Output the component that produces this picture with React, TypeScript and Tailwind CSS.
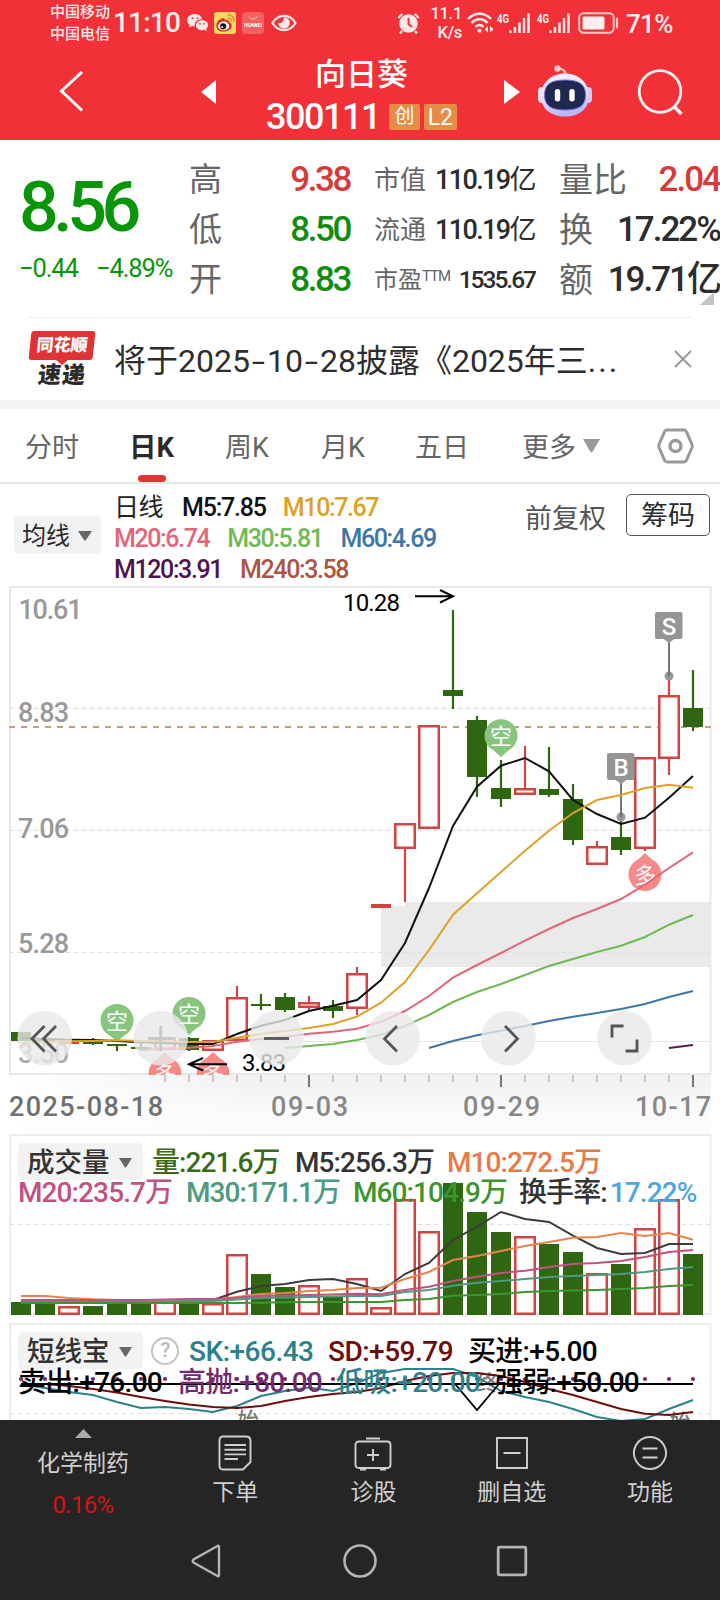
import React from 'react';

type Candle = { up: boolean; top: number; bottom: number; high: number; low: number };

const STEP = 24;
const cx = (i: number) => 21 + i * STEP;

const c = (kind: 'r' | 'g', top: number, bottom: number, high = top, low = bottom): Candle => ({
  up: kind === 'r',
  top,
  bottom,
  high,
  low,
});

const CANDLES: Candle[] = [
  c('g', 1032, 1041),
  c('g', 1040, 1042),
  c('r', 1041, 1044),
  c('g', 1041, 1044, 1038, 1045),
  c('g', 1044, 1046, 1044, 1051),
  c('g', 1047, 1049, 1043, 1051),
  c('r', 1037, 1050),
  c('g', 1038, 1050, 1037, 1051),
  c('r', 1040, 1051),
  c('r', 997, 1041, 986, 1041),
  c('g', 1004, 1006, 994, 1010),
  c('g', 997, 1010, 993, 1012),
  c('r', 1002, 1008, 996, 1011),
  c('g', 1006, 1011, 1000, 1018),
  c('r', 973, 1009, 967, 1015),
  c('r', 904, 908),
  c('r', 823, 849, 823, 902),
  c('r', 725, 829),
  c('g', 690, 696, 610, 709),
  c('g', 720, 777, 716, 797),
  c('g', 788, 799, 760, 807),
  c('r', 788, 795, 746, 795),
  c('g', 789, 795, 747, 797),
  c('g', 799, 840, 784, 845),
  c('r', 846, 865, 841, 865),
  c('g', 837, 850, 817, 855),
  c('r', 757, 849, 757, 851),
  c('r', 695, 759, 676, 775),
  c('g', 708, 727, 670, 731),
];

const PRICE_LINES = [
  { color: '#5a1a55', start: 27, ys: [1048, 1045] },
  { color: '#3d77a6', start: 17, ys: [1048, 1041, 1035.3, 1030.7, 1026, 1021, 1016.7, 1013, 1009, 1004, 997, 991] },
  { color: '#6fb957', start: 11, ys: [1048, 1046, 1044, 1040, 1034.7, 1026, 1015, 1002, 992, 984, 975, 966, 959, 952, 945.7, 937, 924.7, 915] },
  { color: '#e4647a', start: 5, ys: [1050, 1049, 1047.7, 1046, 1041.7, 1039, 1036.7, 1033.7, 1031.7, 1028.7, 1021.7, 1011, 996, 977.7, 965, 953, 940.7, 929, 918, 909, 899, 884.7, 868, 852.3] },
  { color: '#111111', start: 0, ys: [1038, 1039, 1039.7, 1040, 1041, 1042.3, 1043, 1044, 1044, 1034, 1025.7, 1020, 1011, 1005.7, 1000, 980, 943, 888, 826, 786.7, 765.7, 758, 771.3, 800, 814, 824, 817.7, 797.7, 776] },
  { color: '#dda127', start: 0, ys: [1043, 1042, 1041.3, 1041, 1040.3, 1041, 1041.5, 1042, 1042, 1037.7, 1034, 1031, 1028, 1024, 1016.7, 1002.7, 982, 950, 914.7, 893.3, 872, 850.7, 830.7, 813, 800, 795, 788, 784.7, 787.7] },
];

const VOLUMES = [
  1302, 1304, 1306, 1306, 1304, 1304, 1300, 1303, 1303, 1254, 1274, 1287, 1285, 1297, 1278, 1307,
  1199, 1231, 1183, 1212, 1232, 1236, 1244, 1252, 1273, 1264, 1228, 1199, 1254,
];

const VOLUME_LINES = [
  { color: '#3c3c3c', start: 0, ys: [1300, 1300, 1300, 1300, 1300, 1300, 1300, 1300, 1300, 1291.7, 1286, 1284, 1280, 1279, 1284, 1291, 1274, 1263, 1240, 1226.7, 1212, 1219, 1222, 1235.7, 1248, 1254, 1253, 1244, 1244] },
  { color: '#e8824e', start: 0, ys: [1296, 1296, 1298, 1299.3, 1300, 1300, 1300, 1301, 1300, 1297, 1294, 1293, 1291, 1290, 1288, 1287.7, 1279, 1272, 1260, 1256, 1251, 1246, 1242, 1237.7, 1237, 1233, 1236, 1233, 1239.7] },
  { color: '#c2517f', start: 0, ys: [1300, 1300, 1300, 1300, 1300, 1300, 1299.5, 1299, 1299, 1297.7, 1296, 1295.5, 1295, 1294.5, 1293.7, 1294.3, 1290, 1286.7, 1281, 1276.7, 1273, 1270.7, 1267, 1264, 1263, 1261, 1257, 1252, 1250] },
  { color: '#4d9a80', start: 0, ys: [1302, 1302, 1302, 1302, 1302, 1302, 1302, 1301, 1301, 1299.5, 1298, 1297.5, 1297, 1296.5, 1296, 1296, 1292, 1290, 1285.7, 1282.7, 1281, 1279, 1277, 1276, 1275, 1274, 1272, 1269, 1267] },
  { color: '#3d9530', start: 0, ys: [1303, 1303, 1303, 1303, 1303, 1303, 1303, 1303, 1303, 1303, 1302.7, 1302.3, 1302, 1302, 1302, 1302, 1300, 1299, 1295.7, 1295, 1294, 1292, 1291, 1290.5, 1290, 1289, 1288, 1286, 1285] },
];

const SHORT_LINES = [
  { color: '#2c818a', start: 0, ys: [1384, 1388, 1392, 1395, 1402, 1408, 1407, 1409, 1412, 1406, 1396, 1391, 1387.5, 1391, 1383, 1373, 1369, 1369, 1369, 1377, 1391, 1397, 1402, 1409, 1417, 1421, 1419, 1409, 1400] },
  { color: '#6d0d0d', start: 0, ys: [1384, 1384, 1386, 1389, 1392.5, 1397, 1401, 1404.5, 1407, 1408, 1406, 1401, 1397, 1394, 1392, 1388, 1381, 1376, 1373, 1373, 1376, 1382, 1389, 1395, 1402, 1409, 1413.7, 1415, 1412] },
];

const toPoints = (ys: number[], start: number) => ys.map((y, i) => `${cx(i + start)},${y}`).join(' ');

const RED = '#d04444';
const GREEN = '#2e6612';

const Lines: React.FC<{ data: { color: string; start: number; ys: number[] }[] }> = ({ data }) => (
  <>
    {data.map((l) => (
      <polyline key={l.color} points={toPoints(l.ys, l.start)} fill="none" stroke={l.color} strokeWidth={2} />
    ))}
  </>
);

const Bar: React.FC<{ x: number; top: number; bottom: number; up: boolean }> = ({ x, top, bottom, up }) => {
  if (!up) return <rect x={x - 10} y={top} width={20} height={bottom - top} fill={GREEN} />;
  if (bottom - top < 5) return <rect x={x - 10} y={top} width={20} height={bottom - top} fill={RED} />;
  return (
    <rect x={x - 9.75} y={top + 1.25} width={19.5} height={bottom - top - 2.5} fill="white" stroke={RED} strokeWidth={2.5} />
  );
};

// Bubble marking a bearish (空) or bullish (多) signal
const Signal: React.FC<{ x: number; y: number; bull?: boolean }> = ({ x, y, bull }) => {
  const dir = bull ? -1 : 1;
  return (
    <g fill={bull ? '#f58b89' : '#87c47e'}>
      <circle cx={x} cy={y} r={16.5} />
      <path d={`M${x - 8} ${y + dir * 14} L${x} ${y + dir * 21.5} L${x + 8} ${y + dir * 14} Z`} />
      <text x={x} y={y + 8} fontSize={22} fill="white" textAnchor="middle">{bull ? '多' : '空'}</text>
    </g>
  );
};

const TradeFlag: React.FC<{ x: number; y: number; label: string; dotY: number }> = ({ x, y, label, dotY }) => (
  <g>
    <circle cx={x} cy={dotY} r={4.5} fill="#999" />
    <path d={`M${x} ${y + 30} V${dotY}`} stroke="#666" strokeWidth={1.8} />
    <rect x={x - 14} y={y} width={27.5} height={27} rx={2} fill="#959595" />
    <path d={`M${x - 6} ${y + 26.5} L${x} ${y + 31} L${x + 6} ${y + 26.5} Z`} fill="#959595" />
    <text x={x} y={y + 22.5} fontSize={24} fontWeight={500} fill="white" textAnchor="middle">{label}</text>
  </g>
);

const PriceChart: React.FC = () => (
  <svg className="block h-[550px] w-[720px]" viewBox="0 584 720 550">
    <defs>
      <linearGradient id="axisFade" x1="0" y1="0" x2="0" y2="1">
        <stop offset="0" stopColor="#f0f0f0" />
        <stop offset="0.6" stopColor="#fafafa" />
        <stop offset="1" stopColor="#fbfbfb" />
      </linearGradient>
      <linearGradient id="axisLeft" x1="0" y1="0" x2="1" y2="0">
        <stop offset="0" stopColor="white" />
        <stop offset="1" stopColor="white" stopOpacity="0" />
      </linearGradient>
      <clipPath id="plot">
        <rect x="9" y="584" width="703" height="491" />
      </clipPath>
    </defs>
    <rect x="9" y="1074" width="702" height="60" fill="url(#axisFade)" />
    <rect x="9" y="1074" width="240" height="60" fill="url(#axisLeft)" />
    <path d="M405 902 H711 V967 H381 V906 H405 Z" fill="#eaeaea" />
    <g stroke="#dedede" strokeWidth="1.2" strokeDasharray="4 4">
      <path d="M10 708.3 H711" />
      <path d="M10 830.3 H711" />
      <path d="M10 952.5 H711" />
    </g>
    <path d="M10 1041.5 H711" stroke="#e6e6e6" strokeWidth="1.2" />
    <rect x="10" y="587" width="700.5" height="487" fill="none" stroke="#e9e9e9" strokeWidth="2" />
    <path d="M9 727 H711" stroke="#bda477" strokeWidth="2" strokeDasharray="6 6" />

    <g fill="#999" fontSize="27" fontWeight="500">
      <text x="18.5" y="619" textLength="64">10.61</text>
      <text x="18" y="722" textLength="51">8.83</text>
      <text x="18" y="838" textLength="51">7.06</text>
      <text x="18" y="952.5" textLength="51">5.28</text>
      <text x="18" y="1063" textLength="51" fill="#aaa">3.50</text>
    </g>

    <g clipPath="url(#plot)">
      {CANDLES.map((k, i) => (
        <g key={i}>
          <path d={`M${cx(i)} ${k.high} V${k.low}`} stroke={k.up ? RED : GREEN} strokeWidth={2.2} />
          <Bar x={cx(i)} top={k.top} bottom={k.bottom} up={k.up} />
        </g>
      ))}
      <Signal x={117} y={1020.5} />
      <Signal x={189} y={1013.5} />
      <Signal x={501} y={735.7} />
      <Signal x={165} y={1073.5} bull />
      <Signal x={213} y={1073.5} bull />
      <Signal x={645} y={874.5} bull />
      <TradeFlag x={669} y={612} label="S" dotY={676} />
      <TradeFlag x={621} y={753} label="B" dotY={817} />
      <Lines data={PRICE_LINES} />
    </g>

    <g fill="none" stroke="black" strokeWidth="2">
      <path d="M415 596.3 H452 M440 590 L453 596.3 L440 602.5" />
      <path d="M227 1064.3 H190 M203 1058 L189 1064.3 L203 1070.5" />
    </g>
    <text x="343" y="611" fontSize="24" textLength="57">10.28</text>
    <text x="242" y="1070.5" fontSize="24" textLength="44">3.83</text>

    {[44.7, 160.7, 276.7, 392.7, 508.5, 624.5].map((x) => (
      <circle key={x} cx={x} cy={1038.3} r={27.3} fill="#e9e9e9" fillOpacity={0.8} />
    ))}
    <g fill="none" stroke="#555" strokeWidth="2.8">
      <path d="M44.5 1026 L32 1038.7 L44.5 1051.5 M56 1026 L43.5 1038.7 L56 1051.5" />
      <path d="M148 1038.5 H173 M160.7 1026 V1051" stroke="#c9c9c9" />
      <path d="M264 1038.5 H289" />
      <path d="M397 1026 L384.5 1038.7 L397 1051.5" />
      <path d="M505 1026 L517.5 1038.7 L505 1051.5" />
      <path d="M623.5 1026 H612 V1037.5 M637 1039.5 V1051 H625.5" />
    </g>

    {Array.from({ length: 23 }, (_, k) => {
      const x = 165 + k * STEP;
      const major = k % 8 === 6;
      return (
        <path key={x} d={`M${x} 1075 V${major ? 1087 : 1082}`} stroke={major ? '#777' : '#999'} strokeWidth={major ? 2 : 1} />
      );
    })}
    <g fill="#888" fontSize="27" fontWeight="500">
      <text x="9" y="1115.5" textLength="154" fill="#707070">2025-08-18</text>
      <text x="271" y="1115.5" textLength="77">09-03</text>
      <text x="463" y="1115.5" textLength="77">09-29</text>
      <text x="635" y="1115.5" textLength="76">10-17</text>
    </g>
  </svg>
);

const VolumeChart: React.FC = () => (
  <svg className="absolute inset-0 h-[189px] w-[720px]" viewBox="0 1134 720 189">
    <rect x="10" y="1135" width="700.5" height="179" fill="none" stroke="#ececec" strokeWidth="2" />
    <path d="M10 1224.3 H711" stroke="#dedede" strokeWidth="1.2" strokeDasharray="4 4" />
    {VOLUMES.map((top, i) => (
      <Bar key={i} x={cx(i)} top={top} bottom={1315} up={CANDLES[i].up} />
    ))}
    <Lines data={VOLUME_LINES} />
  </svg>
);

const ShortTermChart: React.FC = () => (
  <svg className="absolute inset-0 h-[97px] w-[720px]" viewBox="0 1323 720 97">
    <path d="M10 1420 V1324 H710.5 V1420" fill="none" stroke="#ececec" strokeWidth="2" />
    <path d="M10 1413.5 H711" stroke="#dedede" strokeWidth="1.2" strokeDasharray="4 4" />
    <g fill="#777" fontSize="21" textAnchor="middle">
      <text x="248" y="1427">始</text>
      <text x="680" y="1429">始</text>
      <text x="487" y="1390">终</text>
    </g>
    {CANDLES.map((_, i) => (
      <circle key={i} cx={cx(i)} cy={1379} r={2.1} fill="#74296f" />
    ))}
    <Lines data={SHORT_LINES} />
    <path d="M21 1384 H455 L477 1410 L499 1384 M455 1384 H693" fill="none" stroke="black" strokeWidth="1.8" />
  </svg>
);

const Caret: React.FC<{ className: string }> = ({ className }) => (
  <svg className={className} viewBox="0 0 14 10" preserveAspectRatio="none"><path d="M0 0 H14 L7.8 9.3 Q7 10 6.2 9.3 Z" fill="currentColor" /></svg>
);

const Robot: React.FC = () => (
  <svg className="h-[54px] w-[56px]" viewBox="0 0 56 54">
    <defs>
      <linearGradient id="shell" x1="0" y1="0" x2="0.3" y2="1">
        <stop offset="0" stopColor="#fff4fa" />
        <stop offset="0.6" stopColor="#e6dcfa" />
        <stop offset="1" stopColor="#b9b8fa" />
      </linearGradient>
    </defs>
    <path d="M28 11 C29 5.500 26 3.500 21 3.500" fill="none" stroke="#ffc9cf" strokeWidth="2.2" />
    <circle cx="20.500" cy="3.500" r="3.200" fill="#ffc9cf" />
    <rect x="1" y="22" width="8" height="16" rx="4" fill="#f3dcec" />
    <rect x="47" y="22" width="8" height="16" rx="4" fill="#d6c8f2" />
    <path d="M28 8.500 C42 8.500 52 18 52 31 C52 44 42 51.500 28 51.500 C14 51.500 4 44 4 31 C4 18 14 8.500 28 8.500 Z" fill="url(#shell)" />
    <path d="M28 15 C43 15 48.500 20 48.500 30 C48.500 40 43 45 28 45 C13 45 7.500 40 7.500 30 C7.500 20 13 15 28 15 Z" fill="#1f2850" stroke="#7d74dc" strokeWidth="1" />
    <rect x="17.800" y="24" width="5.400" height="12.500" rx="2.700" fill="white" />
    <rect x="32.300" y="24" width="5.400" height="12.500" rx="2.700" fill="white" />
  </svg>
);

const SignalBars: React.FC = () => (
  <svg className="h-6 w-[34px]" viewBox="0 0 34 24">
    <text x="0" y="11.5" fontSize="12.5" fontWeight="700" fill="#ffeceb" textLength="12" lengthAdjust="spacingAndGlyphs">4G</text>
    <path d="M13.5 22 V19.5 M18 22 V16 M22.5 22 V11.5 M27 22 V7 M31.5 22 V2.5" stroke="#ffe9e8" strokeWidth="2.5" />
  </svg>
);

const StatusBar: React.FC = () => (
  <div className="flex h-[46px] items-center pl-[50px] text-[#ffeceb]">
    <div className="w-[63px] text-[15px] leading-[22px] font-medium">
      <div>中国移动</div>
      <div>中国电信</div>
    </div>
    <span className="w-[74px] text-[28px] font-medium tracking-[-0.8px]">11:10</span>
    <svg className="h-[20px] w-[21px]" viewBox="0 0 21 20" fill="#ffe9e8">
      <path d="M8 1 C3.5 1 0 3.8 0 7.2 C0 9.2 1.1 10.8 2.7 12 L2 14.5 L5 13 C6 13.3 7 13.4 7.8 13.4 C7 8.5 11 6 15.2 6.2 C14.5 3.2 11.5 1 8 1 Z" />
      <path d="M21 12 C21 9.2 18.2 7.2 15 7.2 C11.7 7.2 9 9.4 9 12.2 C9 15 11.7 17.2 15 17.2 C15.8 17.2 16.6 17 17.3 16.8 L19.7 18.2 L19 16 C20.3 15 21 13.6 21 12 Z" />
      <g fill="#f03038"><circle cx="5.5" cy="5.3" r="1" /><circle cx="10.5" cy="5.3" r="1" /><circle cx="13" cy="10.8" r="0.9" /><circle cx="17" cy="10.8" r="0.9" /></g>
    </svg>
    <svg className="ml-[6px] h-[22px] w-[22px]" viewBox="0 0 22 22">
      <rect width="22" height="22" rx="3" fill="#fbd65c" />
      <path d="M8 6.5 C4.5 7.5 2 11 2.5 14.5 C3 18.5 7 20 10.5 19.6 C15 19 18.5 16 17.6 12.5 C17 11 15.5 11 15.3 10.3 C15 8 13 7.6 11.2 8.2 C10.8 6.5 9.6 6 8 6.5 Z" fill="#d92a25" />
      <ellipse cx="9.6" cy="14" rx="5.6" ry="4.4" fill="white" />
      <circle cx="9.2" cy="14.3" r="3.1" fill="#111" />
      <circle cx="8.2" cy="15" r="1" fill="white" />
      <path d="M14 6 C16 5.7 17.5 7.3 17 9.3 M13.6 3 C17.5 2.2 21 6 19.6 10" fill="none" stroke="#eb8c22" strokeWidth="1.4" />
    </svg>
    <svg className="ml-[6px] h-[22px] w-[22px]" viewBox="0 0 22 22">
      <rect width="22" height="22" rx="4" fill="#f4605f" />
      <path d="M7 4 C7.5 8 14.5 8 15 4" fill="none" stroke="#ffc5c3" strokeWidth="1" />
      <text x="2" y="14.5" fontSize="5" fontWeight="700" fill="white" textLength="18">HUAWEI</text>
    </svg>
    <svg className="ml-[7px] h-[20px] w-[26px]" viewBox="0 0 26 20" fill="none" stroke="#ffe9e8">
      <path d="M1.5 10 C7 0.5 19 0.5 24.5 10 C19 19.5 7 19.5 1.5 10 Z" strokeWidth="2.2" />
      <path d="M13 4.2 A5.8 5.8 0 1 1 7.2 10 C10 11 13 8 13 4.2 Z" fill="#ffe9e8" stroke="none" />
    </svg>
    <svg className="ml-[100px] h-[22px] w-[23px]" viewBox="0 0 23 22">
      <circle cx="11.5" cy="11.5" r="9.3" fill="#ffe9e8" />
      <path d="M1.5 6 A10 10 0 0 1 5.5 2 M17.500 2 A10 10 0 0 1 21.5 6 M5 19 L3 21.5 M18 19 L20 21.5" fill="none" stroke="#ffe9e8" strokeWidth="2.4" />
      <path d="M11.500 6 V12 L15 15" fill="none" stroke="#f03038" strokeWidth="2" />
    </svg>
    <div className="ml-[9px] w-[38px] text-right text-[16.5px] leading-[19px] font-medium tracking-[-0.3px] pr-[5px]">
      <div>11.1</div>
      <div>K/s</div>
    </div>
    <svg className="h-[22px] w-[27px]" viewBox="0 0 27 22" fill="none" stroke="#ffe9e8" strokeWidth="2.4">
      <path d="M1 7 C7.5 0 17.5 0 24 7 M4.5 11 C9 6 16 6 20.5 11 M8.5 15 C11 12.4 14 12.4 16.5 15" />
      <circle cx="12.5" cy="18.7" r="2" fill="#ffe9e8" stroke="none" />
      <path d="M21 14 L17.5 17.3 L21 20.5 Z M23 14 L26.5 17.3 L23 20.5 Z" fill="#ffe9e8" stroke="none" />
    </svg>
    <div className="ml-[3px] flex gap-[6px]">
      <SignalBars />
      <SignalBars />
    </div>
    <svg className="ml-[7px] h-[22px] w-[41px]" viewBox="0 0 41 22">
      <rect x="1.2" y="1.2" width="34.5" height="19.6" rx="4.5" fill="none" stroke="#ffc9c8" strokeWidth="2" />
      <rect x="4.5" y="4.5" width="22" height="13" rx="1.5" fill="#fff0ef" />
      <path d="M39 6.5 V15.5" stroke="#ffc9c8" strokeWidth="2.2" strokeLinecap="round" />
    </svg>
    <span className="ml-[7px] pt-[2px] text-[26px] font-medium tracking-[-0.7px]">71%</span>
  </div>
);

const Header: React.FC = () => (
  <header className="h-[140px] bg-[#f23037] text-white">
    <StatusBar />
    <div className="flex h-[94px] items-center pb-[2px]">
      <svg className="ml-[59px] h-[42px] w-[25px]" viewBox="0 0 25 42"><path d="M23 1 L2.5 20 L23 39.500" fill="none" stroke="white" strokeWidth="3" /></svg>
      <svg className="ml-[117px] h-6 w-[15px]" viewBox="0 0 15 24"><path d="M15 0 V24 L0 12 Z" fill="white" /></svg>
      <div className="ml-[49px] flex w-[193px] flex-col items-center pt-[10px]">
        <h1 className="text-[31px] leading-[40px] font-medium">向日葵</h1>
        <div className="flex items-center gap-[4px]">
          <span className="mr-[5px] text-[36px] leading-[44px] font-medium tracking-[-1.5px]">300111</span>
          <span className="h-[26px] w-[31px] rounded-[2px] bg-[#e58c47] text-center text-[20px] leading-[25px]">创</span>
          <span className="h-[26px] w-[33px] rounded-[2px] bg-[#e58c47] text-center text-[23px] leading-[27px]">L2</span>
        </div>
      </div>
      <svg className="ml-[46px] h-6 w-[16px]" viewBox="0 0 16 24"><path d="M0 0 V24 L16 12 Z" fill="white" /></svg>
      <div className="ml-[17px]"><Robot /></div>
      <svg className="ml-[44px] h-[47px] w-[47px]" viewBox="0 0 47 47" fill="none" stroke="#fff4f4" strokeWidth="2.8">
        <circle cx="23" cy="22.500" r="20.800" />
        <path d="M37 37.500 L44.500 45" strokeWidth="3.6" />
      </svg>
    </div>
  </header>
);

const BIG_CELLS = [
  ['高', '9.38', 'text-[#d63a3a]'],
  ['低', '8.50', 'text-[#108c10]'],
  ['开', '8.83', 'text-[#108c10]'],
];

const RIGHT_CELLS = [
  ['量比', '2.04', 'text-[#d63a3a]'],
  ['换', '17.22%', 'text-[#2d2d2d]'],
  ['额', '19.71亿', 'text-[#2d2d2d]'],
];

const Quote: React.FC = () => (
  <section className="relative flex h-[177px] pt-[15px]">
    <div className="w-[189px] pl-[19px] text-[#089608]">
      <div className="pt-[11px] text-[70px] leading-[82px] font-medium tracking-[-5.500px]">8.56</div>
      <div className="flex text-[25.500px] leading-[40px] tracking-[-1.1px]">
        <span className="w-[77px]">−0.44</span>
        <span>−4.89%</span>
      </div>
    </div>
    <div className="w-[161px]">
      {BIG_CELLS.map(([label, value, color]) => (
        <div key={label} className="flex h-[50px] items-center justify-between">
          <span className="text-[33px] text-[#666]">{label}</span>
          <span className={`text-[35px] font-medium tracking-[-2.4px] ${color}`}>{value}</span>
        </div>
      ))}
    </div>
    <div className="ml-[24px] w-[161px] text-[#2d2d2d]">
      {['市值', '流通'].map((label) => (
        <div key={label} className="flex h-[50px] items-center justify-between">
          <span className="text-[26px] text-[#666]">{label}</span>
          <span className="text-[27px] font-medium tracking-[-1.6px]">110.19<span className="font-normal">亿</span></span>
        </div>
      ))}
      <div className="flex h-[50px] items-center justify-between">
        <span className="flex text-[24px] text-[#666]">市盈<sup className="top-0 pt-[7px] text-[15px] leading-[15px] tracking-[-1px]">TTM</sup></span>
        <span className="text-[24.5px] font-medium tracking-[-2px]">1535.67</span>
      </div>
    </div>
    <div className="ml-[24px] w-[161px]">
      {RIGHT_CELLS.map(([label, value, color]) => (
        <div key={label} className="flex h-[50px] items-center justify-between">
          <span className="text-[34px] text-[#666]">{label}</span>
          <span className={`text-[35px] font-medium tracking-[-2px] whitespace-nowrap ${color}`}>{value}</span>
        </div>
      ))}
    </div>
    <svg className="absolute right-[6px] bottom-[12px] h-[13px] w-[14px]" viewBox="0 0 14 13"><path d="M14 0 V13 H0 Z" fill="#c4c4c4" /></svg>
  </section>
);

const Dash: React.FC = () => <span className="inline-block w-[17px] scale-x-150 text-center">-</span>;

const News: React.FC = () => (
  <section className="mx-[28px] flex h-[83px] items-center border-t border-[#ededed]">
    <div className="flex h-[58px] w-[68px] flex-col items-center pt-[1px]">
      <div className="flex h-[29px] w-[64px] -skew-x-6 items-center justify-center rounded-[3px] bg-[#df3437] text-[17px] font-black text-white">同花顺</div>
      <svg className="h-[5px] w-[12px]" viewBox="0 0 12 5"><path d="M0 0 H12 L6 5 Z" fill="#df3437" /></svg>
      <div className="-skew-x-6 text-[23px] leading-[22px] font-black tracking-[1px] text-[#2b2b2b]">速递</div>
    </div>
    <p className="ml-[18px] w-[560px] pt-[3px] text-[32px] whitespace-nowrap text-[#2d2d2d]">
      将于2025<Dash />10<Dash />28披露《2025年三<span className="tracking-[2px]">...</span>
    </p>
    <svg className="h-[18px] w-[18px] shrink-0" viewBox="0 0 18 18"><path d="M1 1 L17 17 M17 1 L1 17" stroke="#999" strokeWidth="2" /></svg>
  </section>
);

const TABS = [
  { label: '分时', width: 'w-[104px]' },
  { label: '日K', width: 'w-[96px]', active: true },
  { label: '周K', width: 'w-[96px]' },
  { label: '月K', width: 'w-[94px]' },
  { label: '五日', width: 'w-[107px]' },
];

const Tabs: React.FC = () => (
  <nav className="flex h-[75px] items-center border-b-2 border-[#e8e8e8] pl-[25px] text-[27px] text-[#666]">
    {TABS.map((t) => (
      <div key={t.label} className={`relative flex h-full items-center pt-[5px] ${t.width} ${t.active ? 'text-[27.5px] font-bold text-[#2b2b2b]' : ''}`}>
        {t.label}
        {t.active && <span className="absolute bottom-0 left-[9px] h-[7px] w-[28px] rounded-full bg-[#df3437]" />}
      </div>
    ))}
    <span className="pt-[5px]">更多</span>
    <Caret className="ml-[7px] h-[14px] w-[17px] text-[#999]" />
    <svg className="ml-[57px] h-[36px] w-[37px]" viewBox="0 0 37 36" fill="none" stroke="#999">
      <path d="M10 2 H27 Q28.5 2 29.3 3.4 L35 16.5 Q35.6 18 35 19.5 L29.3 32.6 Q28.5 34 27 34 H10 Q8.5 34 7.7 32.6 L2 19.5 Q1.4 18 2 16.5 L7.7 3.4 Q8.5 2 10 2 Z" strokeWidth="3" />
      <circle cx="18.5" cy="18" r="5.5" strokeWidth="3.4" />
    </svg>
  </nav>
);

const MaLegend: React.FC = () => (
  <section className="flex h-[100px]">
    <button className="mt-[32px] ml-[14px] flex h-[38px] w-[87px] items-center rounded-[5px] bg-[#f2f2f2] pt-[2px] pl-[8px] text-[24px] text-[#2b2b2b]">
      均线
      <Caret className="ml-[8px] h-[10px] w-[14px] text-[#666]" />
    </button>
    <div className="ml-[13px] w-[411px] pt-[8px] text-[25px] leading-[31px] font-medium tracking-[-1.4px]">
      <div className="flex gap-[17px]">
        <span className="mr-[2px] font-normal tracking-[-0.5px] text-[#222]">日线</span>
        <span className="tracking-[-1.2px] text-[#111]">M5:7.85</span>
        <span className="text-[#dda127]">M10:7.67</span>
      </div>
      <div className="flex gap-[18px]">
        <span className="text-[#e4647a]">M20:6.74</span>
        <span className="text-[#6fb957]">M30:5.81</span>
        <span className="text-[#3d77a6]">M60:4.69</span>
      </div>
      <div className="flex gap-[18px]">
        <span className="text-[#4d1450]">M120:3.91</span>
        <span className="text-[#ab5543]">M240:3.58</span>
      </div>
    </div>
    <span className="mt-[15px] text-[27px] leading-[40px] text-[#555]">前复权</span>
    <button className="mt-[10px] ml-[20px] h-[42px] w-[84px] rounded-[5px] border border-[#555] pt-[2px] text-[27px] leading-[38px] text-[#2b2b2b]">筹码</button>
  </section>
);

const Picker: React.FC<{ label: string }> = ({ label }) => (
  <button className="flex h-[37px] w-[125px] items-center rounded-[5px] bg-[#f2f2f2] pt-[2px] pl-[9px] text-[27.5px] font-medium tracking-normal text-[#333]">
    {label}
    <Caret className="ml-[9px] h-[10px] w-[13px] text-[#666]" />
  </button>
);

const VolumePanel: React.FC = () => (
  <section className="relative h-[189px] pt-[9px] pl-[18px] text-[28px] font-medium tracking-[-0.9px] whitespace-nowrap">
    <VolumeChart />
    <div className="relative flex h-[37px] items-center">
      <Picker label="成交量" />
      <span className="ml-[9px] w-[143px] pt-[2px] text-[#3a6b1c]">量:221.6万</span>
      <span className="w-[152px] pt-[2px] text-[#333]">M5:256.3万</span>
      <span className="pt-[2px] text-[#e67a48]">M10:272.5万</span>
    </div>
    <div className="relative flex h-[26px] items-center">
      <span className="w-[168px] text-[#c2517f]">M20:235.7万</span>
      <span className="w-[167px] text-[#4d9a80]">M30:171.1万</span>
      <span className="w-[166px] text-[#3d9530]">M60:104.9万</span>
      <span className="text-[#333]">换手率:</span>
      <span className="ml-[3px] text-[#4fa5dc]">17.22%</span>
    </div>
  </section>
);

const ShortTermPanel: React.FC = () => (
  <section className="relative h-[97px] overflow-hidden pt-[9px] pl-[18px] text-[28px] font-medium tracking-[-0.7px] whitespace-nowrap">
    <ShortTermChart />
    <div className="relative flex h-[37px] items-center">
      <Picker label="短线宝" />
      <span className="ml-[8px] flex h-[28px] w-[28px] items-center justify-center rounded-full border-2 border-[#c4c4c4] text-[21px] text-[#bbb]">?</span>
      <span className="ml-[10px] w-[139px] pt-[2px] tracking-[-0.5px] text-[#2c818a]">SK:+66.43</span>
      <span className="w-[140px] pt-[2px] tracking-[-0.5px] text-[#6d0d0d]">SD:+59.79</span>
      <span className="pt-[2px]">买进:+5.00</span>
    </div>
    <div className="relative flex h-[28px] items-center">
      <span className="w-[160px]">卖出:+76.00</span>
      <span className="w-[158px] text-[#74296f]">高抛:+80.00</span>
      <span className="w-[159px] text-[#2c818a]">低吸:+20.00</span>
      <span>强弱:+50.00</span>
    </div>
  </section>
);

const ACTIONS = [
  {
    label: '下单',
    icon: (
      <path d="M6 1.5 H29 Q33.5 1.5 33.5 6 V27 L26 34.5 H6 Q2.5 34.5 2.5 31 V5 Q2.5 1.5 6 1.5 Z M7.5 10 H29 M7.5 14.7 H29 M7.5 19.4 H29 M7.5 24 H21" />
    ),
  },
  {
    label: '诊股',
    icon: (
      <path d="M11 3.500 H25 M4 6.500 H32 Q35.500 6.500 35.500 10 V29.500 Q35.500 33 32 33 H4 Q0.500 33 0.500 29.500 V10 Q0.500 6.500 4 6.500 Z M18 14 V26 M12 20 H24 M5 34.500 H11 M25 34.500 H31" />
    ),
  },
  { label: '删自选', icon: <path d="M3 3 H33 V33 H3 Z M9.5 18 H26.5" /> },
  { label: '功能', icon: <path d="M18 2 A16 16 0 1 1 17.9 2 Z M10.5 13.5 H25.5 M10.5 22.5 H25.5" /> },
];

const BottomBar: React.FC = () => (
  <footer className="h-[180px] bg-[#252525] text-[#d0d0d0]">
    <div className="flex h-[105px]">
      <div className="flex w-[166px] flex-col items-center pt-[9px]">
        <svg className="h-[9px] w-[17px]" viewBox="0 0 17 9"><path d="M8.5 0 L17 9 H0 Z" fill="#aaa" /></svg>
        <span className="mt-[9px] text-[23px] leading-[34px]">化学制药</span>
        <span className="mt-[7px] text-[24px] leading-[34px] tracking-[-0.7px] text-[#d81212]">0.16%</span>
      </div>
      {ACTIONS.map((a) => (
        <div key={a.label} className="flex w-[138.3px] flex-col items-center pt-[15px]">
          <svg className="h-[37px] w-[38px]" viewBox="-1 0 38 37" fill="none" stroke="#cfcfcf" strokeWidth="1.9">{a.icon}</svg>
          <span className="mt-[4px] text-[23px] leading-[34px]">{a.label}</span>
        </div>
      ))}
    </div>
    <div className="flex items-center pt-[19px] pl-[191px]">
      <svg className="h-[34px] w-[30px]" viewBox="0 0 30 34"><path d="M28 3 V31 Q28 33 26 31.7 L2.5 18.5 Q1 17 2.5 15.5 L26 2.3 Q28 1 28 3 Z" fill="none" stroke="#b4b4b4" strokeWidth="2.4" /></svg>
      <svg className="ml-[122px] h-[34px] w-[34px]" viewBox="0 0 34 34"><circle cx="17" cy="17" r="15.5" fill="none" stroke="#b4b4b4" strokeWidth="2.6" /></svg>
      <svg className="ml-[119px] h-[32px] w-[32px]" viewBox="0 0 32 32"><rect x="2.2" y="2.2" width="27.6" height="27.6" rx="1.5" fill="none" stroke="#b4b4b4" strokeWidth="2.8" /></svg>
    </div>
  </footer>
);

export default function App() {
  return (
    <div className="h-[1600px] w-[720px] overflow-hidden bg-white font-[Roboto,'Noto_Sans_CJK_SC',sans-serif] text-black">
      <Header />
      <Quote />
      <News />
      <div className="h-[9px] bg-[#f3f3f3]" />
      <Tabs />
      <MaLegend />
      <PriceChart />
      <VolumePanel />
      <ShortTermPanel />
      <BottomBar />
    </div>
  );
}
